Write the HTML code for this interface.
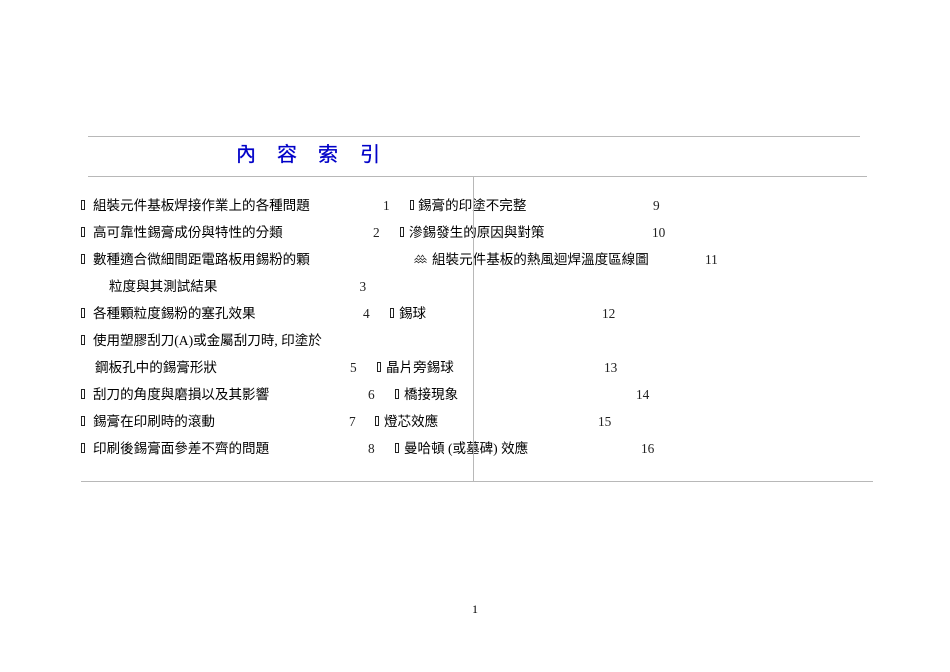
<!DOCTYPE html>
<html lang="zh-Hant">
<head>
<meta charset="utf-8">
<title>內容索引</title>
<style>
html,body{margin:0;padding:0;background:#fff}
#p{position:relative;width:950px;height:672px;overflow:hidden;background:#fff;font-family:"Liberation Serif","WenQuanYi Zen Hei","Noto Sans CJK TC",serif;color:#000;filter:blur(.3px)}
#p .l{position:absolute;background:#b8b8b8}
#p span{position:absolute;white-space:nowrap;line-height:18px;height:18px}
.t{font-family:"Liberation Serif","WenQuanYi Zen Hei","Noto Sans CJK TC",sans-serif;font-size:13.55px}
.n{font-size:13.33px;color:#222}
.h{font-family:"WenQuanYi Zen Hei","Noto Sans CJK TC",sans-serif;font-size:20px;color:#0000c8;-webkit-text-stroke:.3px #0000c8;line-height:24px!important;height:24px!important}
#p i{position:absolute;width:2px;height:8px;border:1px solid #222;background:#fff;box-sizing:content-box}
</style>
</head>
<body>
<div id="p">
<span class="h" style="left:236px;top:141px">內</span>
<span class="h" style="left:277px;top:141px">容</span>
<span class="h" style="left:318px;top:141px">索</span>
<span class="h" style="left:360px;top:141px">引</span>

<i style="left:81px;top:200px"></i><span class="t" style="left:93px;top:197px">組裝元件基板焊接作業上的各種問題</span><span class="n" style="left:383px;top:197px">1</span>
<i style="left:410px;top:200px"></i><span class="t" style="left:418px;top:197px">錫膏的印塗不完整</span><span class="n" style="left:653px;top:197px">9</span>

<i style="left:81px;top:227px"></i><span class="t" style="left:93px;top:224px">高可靠性錫膏成份與特性的分類</span><span class="n" style="left:373px;top:224px">2</span>
<i style="left:400px;top:227px"></i><span class="t" style="left:409px;top:224px">滲錫發生的原因與對策</span><span class="n" style="left:652px;top:224px">10</span>

<i style="left:81px;top:254px"></i><span class="t" style="left:93px;top:251px">數種適合微細間距電路板用錫粉的顆</span>
<svg style="position:absolute;left:414px;top:254px" width="13" height="10" viewBox="0 0 13 10" fill="none" stroke="#333" stroke-width=".8"><path d="M3 3.2l1.5-2 1.5 2M7 3.2l1.5-2 1.5 2M.5 6.2l2-2 2 2 2-2 2 2 2-2 2 2M.5 8.8l2-1.8 2 1.8 2-1.8 2 1.8 2-1.8 2 1.8"/></svg>
<span class="t" style="left:432px;top:251px">組裝元件基板的熱風迴焊溫度區線圖</span><span class="n" style="left:705px;top:251px">11</span>

<span class="t" style="left:109px;top:278px">粒度與其測試結果</span><span class="n" style="left:359.5px;top:278px">3</span>

<i style="left:81px;top:308px"></i><span class="t" style="left:93px;top:305px">各種顆粒度錫粉的塞孔效果</span><span class="n" style="left:363px;top:305px">4</span>
<i style="left:390px;top:308px"></i><span class="t" style="left:399px;top:305px">錫球</span><span class="n" style="left:602px;top:305px">12</span>

<i style="left:81px;top:335px"></i><span class="t" style="left:93px;top:332px">使用塑膠刮刀(A)或金屬刮刀時, 印塗於</span>

<span class="t" style="left:95px;top:359px">鋼板孔中的錫膏形狀</span><span class="n" style="left:350px;top:359px">5</span>
<i style="left:377px;top:362px"></i><span class="t" style="left:386px;top:359px">晶片旁錫球</span><span class="n" style="left:604px;top:359px">13</span>

<i style="left:81px;top:389px"></i><span class="t" style="left:93px;top:386px">刮刀的角度與磨損以及其影響</span><span class="n" style="left:368px;top:386px">6</span>
<i style="left:395px;top:389px"></i><span class="t" style="left:404px;top:386px">橋接現象</span><span class="n" style="left:636px;top:386px">14</span>

<i style="left:81px;top:416px"></i><span class="t" style="left:93px;top:413px">錫膏在印刷時的滾動</span><span class="n" style="left:349px;top:413px">7</span>
<i style="left:375px;top:416px"></i><span class="t" style="left:384px;top:413px">燈芯效應</span><span class="n" style="left:598px;top:413px">15</span>

<i style="left:81px;top:443px"></i><span class="t" style="left:93px;top:440px">印刷後錫膏面參差不齊的問題</span><span class="n" style="left:368px;top:440px">8</span>
<i style="left:395px;top:443px"></i><span class="t" style="left:404px;top:440px">曼哈頓 (或墓碑) 效應</span><span class="n" style="left:641px;top:440px">16</span>

<span style="left:472px;top:600px;font-size:12px">1</span>

<div class="l" style="left:88px;top:136px;width:772px;height:1px"></div>
<div class="l" style="left:88px;top:176px;width:779px;height:1px"></div>
<div class="l" style="left:81px;top:481px;width:792px;height:1px"></div>
<div class="l" style="left:473px;top:177px;width:1px;height:304px"></div>
</div>
</body>
</html>
